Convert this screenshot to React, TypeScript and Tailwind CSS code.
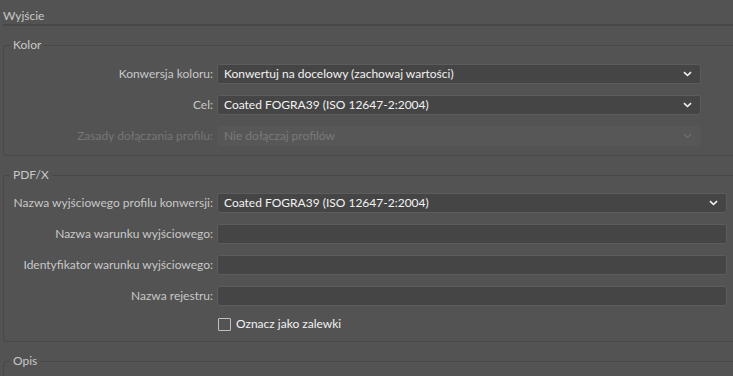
import React from 'react';

const font = { fontFamily: 'Lato, "Noto Sans", sans-serif' };

function Chevron({ disabled }: { disabled?: boolean }) {
  return (
    <svg width="9" height="6" viewBox="0 0 9 6" className="shrink-0">
      <path d="M1 1.2 L4.5 4.5 L8 1.2" fill="none" stroke={disabled ? '#6a6a6a' : '#f2f2f2'} strokeWidth="1.6" />
    </svg>
  );
}

function Select({ value, disabled, w }: { value: string; disabled?: boolean; w: string }) {
  return (
    <div
      className={
        'h-5 flex items-center justify-between pl-[6px] pr-[8px] rounded-[3px] border ' +
        w +
        (disabled ? ' bg-[#575757] border-[#575757] text-[#7a7a7a]' : ' bg-[#454545] border-[#5c5c5c] text-[#f2f2f2]')
      }
    >
      <span className="truncate">{value}</span>
      <Chevron disabled={disabled} />
    </div>
  );
}

function Input({ w }: { w: string }) {
  return <div className={'h-5 rounded-[3px] border border-[#5c5c5c] bg-[#454545] ' + w} />;
}

function Row({ label, disabled, children }: { label: string; disabled?: boolean; children: React.ReactNode }) {
  return (
    <div className="flex items-center gap-[4px]">
      <div className={'w-[209px] shrink-0 text-right ' + (disabled ? 'text-[#767676]' : 'text-[#c8c8c8]')}>{label}</div>
      {children}
    </div>
  );
}

function Group({ title, className, children }: { title: string; className?: string; children?: React.ReactNode }) {
  return (
    <fieldset className={'ml-[3px] w-[760px] border border-[#484848] rounded-[3px] ' + (className ?? '')}>
      <legend className="ml-[6px] px-[3px] leading-4 text-[#c8c8c8]">{title}</legend>
      {children}
    </fieldset>
  );
}

export default function App() {
  return (
    <div className="w-[733px] h-[376px] overflow-hidden bg-[#535353] text-[12px] leading-4" style={font}>
      <div className="ml-[3px] h-[26px] pt-[8px] border-b-2 border-[#474747] text-[#c8c8c8]">Wyjście</div>

      <Group title="Kolor" className="mt-[11px] pt-[11px] pb-[9px]">
        <div className="flex flex-col gap-[11px]">
          <Row label="Konwersja koloru:">
            <Select w="w-[484px]" value="Konwertuj na docelowy (zachowaj wartości)" />
          </Row>
          <Row label="Cel:">
            <Select w="w-[484px]" value="Coated FOGRA39 (ISO 12647-2:2004)" />
          </Row>
          <Row label="Zasady dołączania profilu:" disabled>
            <Select w="w-[484px]" value="Nie dołączaj profilów" disabled />
          </Row>
        </div>
      </Group>

      <Group title="PDF/X" className="mt-[11px] pt-[10px] pb-[9px]">
        <div className="flex flex-col gap-[11px]">
          <Row label="Nazwa wyjściowego profilu konwersji:">
            <Select w="w-[510px]" value="Coated FOGRA39 (ISO 12647-2:2004)" />
          </Row>
          <Row label="Nazwa warunku wyjściowego:">
            <Input w="w-[510px]" />
          </Row>
          <Row label="Identyfikator warunku wyjściowego:">
            <Input w="w-[510px]" />
          </Row>
          <Row label="Nazwa rejestru:">
            <Input w="w-[510px]" />
          </Row>
        </div>
        <div className="mt-[10px] ml-[214px] flex items-center gap-[5px] h-4">
          <span className="w-[13px] h-[13px] border border-[#c0c0c0] rounded-[1px]" />
          <span className="text-[#f2f2f2]">Oznacz jako zalewki</span>
        </div>
      </Group>

      <Group title="Opis" className="mt-[11px] h-[40px]" />
    </div>
  );
}
